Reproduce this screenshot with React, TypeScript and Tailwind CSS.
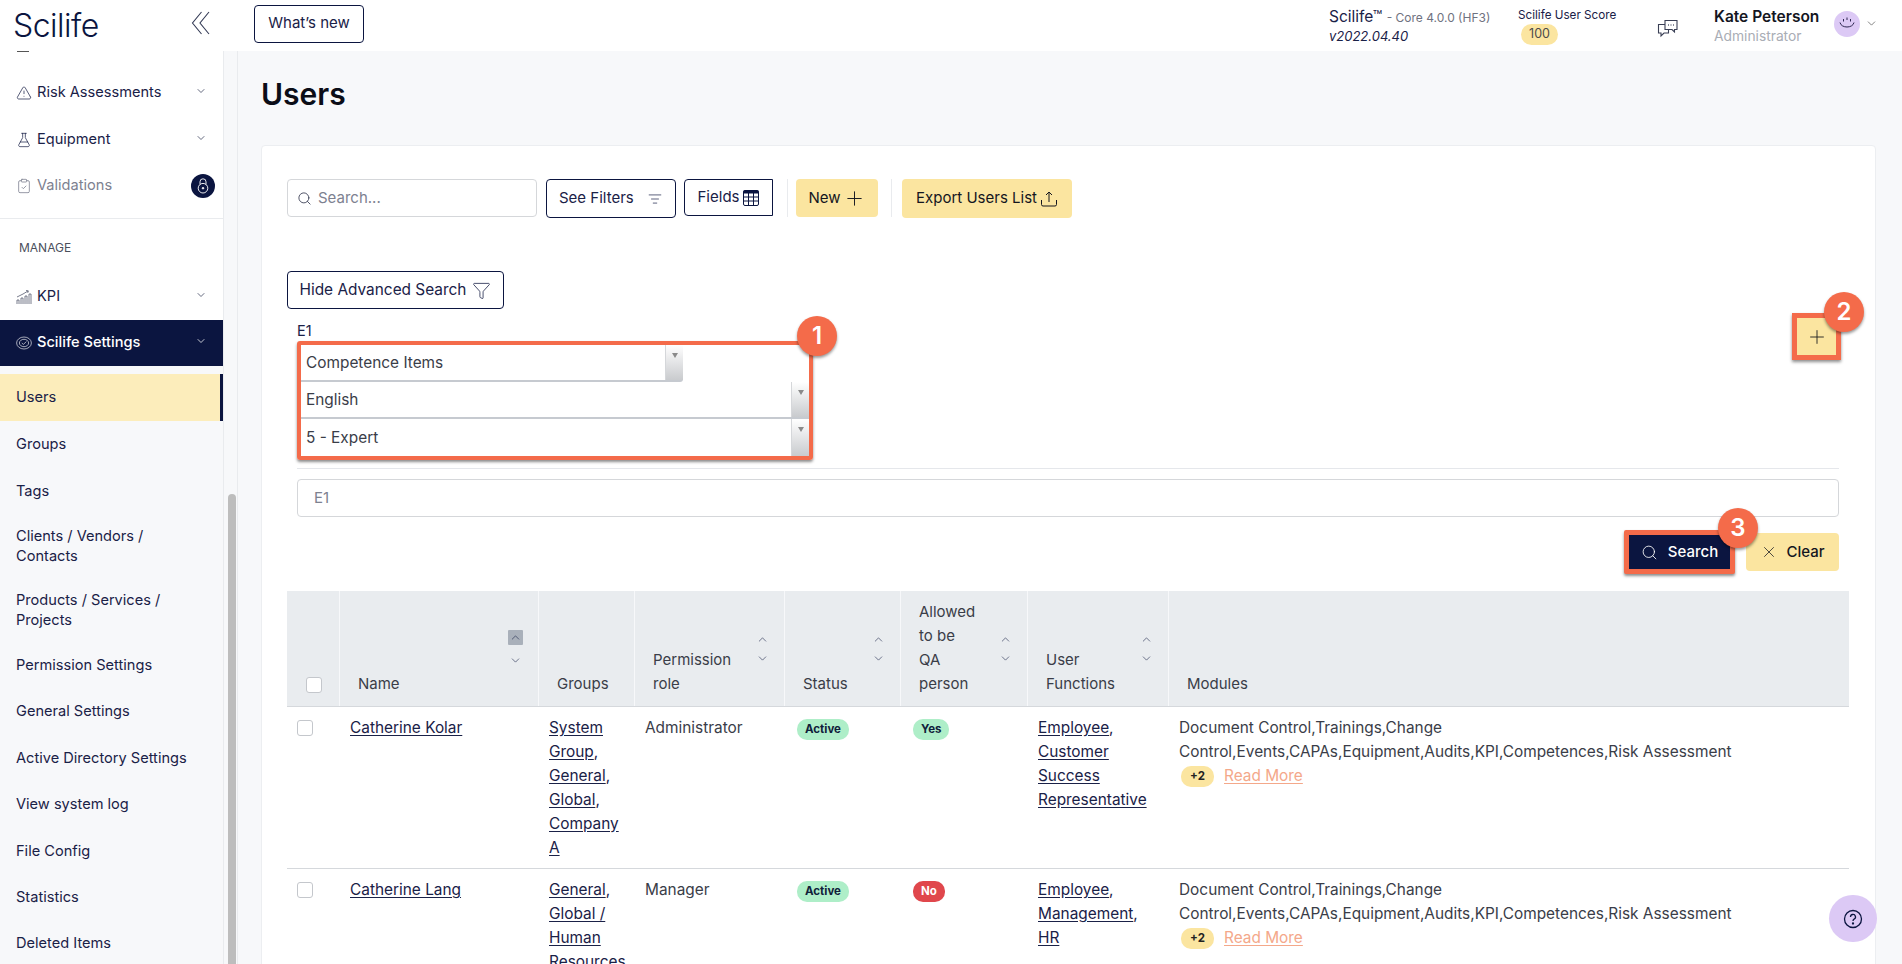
import { ChevronDown, ChevronUp, ClipboardCheck, FlaskConical, Funnel, ListFilter, Plus, Search, TriangleAlert, X } from "lucide-react";

const navy = "#0b1540";

function NavRow({ label, icon, muted, noChevron }: { label: string; icon: React.ReactNode; muted?: boolean; noChevron?: boolean }) {
  return (
    <div className={`flex h-[46.5px] shrink-0 items-center pl-[16px] pr-[16px] text-[14.6px] ${muted ? "text-[#7d8190]" : "text-[#1a2147]"}`}>
      <span className="mr-[5px] flex w-[16px] justify-center">{icon}</span>
      <span className="flex-1">{label}</span>
      {!noChevron && <ChevronDown size={12} strokeWidth={1.5} className="mb-[4px] text-[#333a55]" />}
    </div>
  );
}

const subItems = [
  { label: "Groups" },
  { label: "Tags" },
  { label: "Clients / Vendors / Contacts", two: true },
  { label: "Products / Services / Projects", two: true },
  { label: "Permission Settings" },
  { label: "General Settings" },
  { label: "Active Directory Settings" },
  { label: "View system log" },
  { label: "File Config" },
  { label: "Statistics" },
  { label: "Deleted Items" },
];

function Sidebar() {
  return (
    <aside className="flex w-[238px] shrink-0 overflow-hidden border-r border-[#e9ebee] bg-[#f7f8fa]">
      <div className="flex w-[224px] shrink-0 flex-col border-r border-[#e9ebee] bg-white">
        <div className="ml-[17px] h-[1px] w-[12px] shrink-0 bg-[#555]" />
        <div className="shrink-0 pt-[18px]">
          <NavRow label="Risk Assessments" icon={<TriangleAlert size={16} strokeWidth={1.1} />} />
          <NavRow label="Equipment" icon={<FlaskConical size={16} strokeWidth={1.1} />} />
          <div className="relative">
            <NavRow label="Validations" muted noChevron icon={<ClipboardCheck size={16} strokeWidth={1.2} />} />
            <span className="absolute right-[8px] top-[11px] flex h-[24px] w-[24px] items-center justify-center rounded-full bg-[#0b1540]">
              <svg width="12" height="16" viewBox="0 0 12 16" fill="none" stroke="#fff" strokeWidth="0.9">
                <circle cx="6" cy="10.2" r="4.8" />
                <path d="M3 6.5V3.8a3 3 0 0 1 6 0v2.7" />
                <circle cx="6" cy="10.2" r="0.8" fill="#fff" />
              </svg>
            </span>
          </div>
        </div>
        <div className="mt-[8px] h-[1px] shrink-0 bg-[#e9ebee]" />
        <div className="mt-[21px] shrink-0 pl-[19px] text-[12px] leading-[16px] text-[#4b4f5c]">MANAGE</div>
        <div className="mt-[18px] shrink-0">
          <NavRow
            label="KPI"
            icon={
              <svg width="16" height="16" viewBox="0 0 16 16" fill="none" stroke="#555a6e" strokeWidth="0.8">
                <path d="M1 15v-4h2v4M5 15V9h2v6M9 15V7h2v8M13 15V5h2v10" />
                <path d="M1 8l6-3 5-3M10 1.5l2.4.4-.7 2" />
              </svg>
            }
          />
        </div>
        <div className="flex h-[46px] shrink-0 items-center bg-[#0b1540] pl-[16px] pr-[16px] text-[14.6px] font-medium text-white">
          <svg className="mr-[5px]" width="16" height="14" viewBox="0 0 16 14" fill="none" stroke="#c9cbd6" strokeWidth="0.8">
            <ellipse cx="8" cy="7" rx="7.4" ry="6" />
            <ellipse cx="8" cy="7" rx="4.6" ry="3.7" />
            <path d="M5.8 7l1.6 1.4 3-2.8" />
          </svg>
          <span className="flex-1">Scilife Settings</span>
          <ChevronDown size={12} strokeWidth={1.5} className="mb-[4px] text-white" />
        </div>
        <div className="flex-1 bg-[#f7f8fa] pt-[8px] text-[14.6px] text-[#1a2147]">
          <div className="flex h-[47px] items-center border-r-[3px] border-[#0b1540] bg-[#fcedbb] pl-[16px]">Users</div>
          {subItems.map((item) => (
            <div key={item.label} className={`flex items-center pl-[16px] pr-[30px] leading-[20px] ${item.two ? "h-[64px]" : "h-[46.4px]"}`}>
              {item.label}
            </div>
          ))}
        </div>
      </div>
      <div className="flex-1 pl-[4px] pr-[1px] pt-[443px]">
        <div className="h-full w-[8px] rounded-t-[4px] bg-[#bdbdbd]" />
      </div>
    </aside>
  );
}

function Header() {
  return (
    <header className="flex h-[51px] shrink-0 items-center bg-white text-[#1a2147]">
      <div className="flex w-[254px] shrink-0 items-center pl-[13px]">
        <span className="text-[32px] font-light leading-[40px] tracking-[-0.5px] text-[#0b1540]">Scilife</span>
        <svg className="ml-[92px] mb-[5px]" width="19" height="24" viewBox="0 0 19 24" fill="none" stroke="#333a55" strokeWidth="1.1">
          <path d="M10.500 1 1.500 12 10.500 23M18 1 9 12 18 23" />
        </svg>
      </div>
      <button className="mb-[4px] h-[38px] w-[110px] rounded-[4px] border border-[#0b1540] text-[15px]">What&rsquo;s new</button>
      <div className="ml-auto flex items-center pr-[24px]">
        <div className="w-[189px]">
          <div className="text-[15.5px] leading-[20px]">
            Scilife™ <span className="text-[12px] text-[#6f7280]">- Core 4.0.0 (HF3)</span>
          </div>
          <div className="text-[13px] italic leading-[16px]">v2022.04.40</div>
        </div>
        <div className="w-[139px]">
          <div className="text-[11.7px] leading-[16px]">Scilife User Score</div>
          <span className="ml-[3px] mt-[1px] flex h-[21px] w-[37px] items-center justify-center rounded-[11px] bg-[#fbe5a0] text-[12.5px] text-[#4b4b4b]">100</span>
        </div>
        <div className="w-[57px] pt-[5px]">
          <svg width="22" height="20" viewBox="0 0 22 20" fill="none" stroke="#3a3f55" strokeWidth="1.1">
            <path d="M8 2.500h12v9h-2.500v2.500l-2.500-2.500H8z" />
            <path d="M8 6.500H1.500V15h2.500v3l3-3h4.500v-3.500" />
            <path d="M11 7h.8M13.600 7h.8M16.200 7h.8" strokeWidth="1.4" />
          </svg>
        </div>
        <div className="w-[120px]">
          <div className="text-[15.5px] font-semibold leading-[20px] text-[#14161f]">Kate Peterson</div>
          <div className="text-[13.8px] leading-[18px] text-[#a9adb5]">Administrator</div>
        </div>
        <span className="mb-[4px] flex h-[26px] w-[26px] items-center justify-center rounded-full bg-[#dcc9f5]">
          <svg width="18" height="13" viewBox="0 0 18 13" fill="none" stroke="#2d2550" strokeWidth="1">
            <path d="M2 5.500c1.200 6 12.800 6 14 0M5.500 2v2.500M9 0.500v2.500M12.500 2v2.500" />
          </svg>
        </span>
        <ChevronDown size={13} strokeWidth={1.2} className="mb-[4px] ml-[5px] text-[#444]" />
      </div>
    </header>
  );
}

function Badge({ n, className }: { n: number; className: string }) {
  return (
    <span className={`absolute z-10 flex h-[40px] w-[40px] items-center justify-center rounded-full bg-[#f46b4a] text-[24px] font-semibold text-white shadow-[0_2px_3px_rgba(0,0,0,0.4)] ${className}`}>
      {n}
    </span>
  );
}

function SelectRow({ value, narrow, last }: { value: string; narrow?: boolean; last?: boolean }) {
  return (
    <div className={`flex h-[37px] items-stretch ${last ? "" : "border-b-2 border-[#c6cad0]"} ${narrow ? "w-[382px] rounded-br-[3px]" : "w-full"}`}>
      <span className="flex flex-1 items-center pl-[5px] text-[15.4px] text-[#3a3d48]">{value}</span>
      <span className="flex w-[18px] justify-center border-l border-[#d5d7da] bg-gradient-to-b from-white to-[#c9cbce] pt-[8px]">
        <span className="h-0 w-0 border-x-[3.5px] border-t-[5px] border-x-transparent border-t-[#8a8a8a]" />
      </span>
    </div>
  );
}

function SortArrows({ active }: { active?: boolean }) {
  return (
    <div className={`mt-[10px] flex flex-col items-center self-center text-[#1a2147] ${active ? "gap-[9px]" : "gap-[6px]"}`}>
      <span className={`flex items-center justify-center rounded-[1px] ${active ? "h-[15px] w-[15px] bg-[#a9b0ba]" : "h-[13px] w-[13px]"}`}>
        <ChevronUp size={13} strokeWidth={1.1} />
      </span>
      <ChevronDown size={13} strokeWidth={1.1} />
    </div>
  );
}

function Th({ children, sort, active }: { children?: React.ReactNode; sort?: boolean; active?: boolean }) {
  return (
    <div className="flex items-end justify-between border-l border-[#f7f8fa] pb-[10px] pl-[18px] pr-[15px] text-[15px] leading-[24px] text-[#3a3d48]">
      <div>{children}</div>
      {sort && <SortArrows active={active} />}
    </div>
  );
}

function Pill({ children, color }: { children: React.ReactNode; color: string }) {
  return <span className={`flex h-[21px] w-fit items-center rounded-[10px] px-[8px] text-[11.5px] font-bold leading-none text-[#10203a] ${color}`}>{children}</span>;
}

const rows = [
  {
    name: "Catherine Kolar",
    groups: ["System\nGroup", "General", "Global", "Company\nA"],
    role: "Administrator",
    qa: "Yes",
    fns: ["Employee", "Customer\nSuccess\nRepresentative"],
  },
  {
    name: "Catherine Lang",
    groups: ["General", "Global /\nHuman\nResources"],
    role: "Manager",
    qa: "No",
    fns: ["Employee", "Management", "HR"],
  },
];

function Links({ items }: { items: string[] }) {
  return (
    <div className="whitespace-pre-line">
      {items.map((t, i) => (
        <span key={t}>
          <a className="underline underline-offset-2">{t}</a>
          {i < items.length - 1 ? ",\n" : ""}
        </span>
      ))}
    </div>
  );
}

const gridCols = "grid grid-cols-[52px_199px_96px_150px_116px_127px_141px_681px]";

function UsersTable() {
  return (
    <div className="mt-[17px] w-[1562px] text-[15.4px] leading-[24px] text-[#1a2147]">
      <div className={`${gridCols} h-[116px] border-b border-[#d5d8dc] bg-[#e9ecef]`}>
        <div className="flex items-end justify-center pb-[13px] pl-[2px]">
          <span className="h-[16px] w-[16px] rounded-[3px] border border-[#c4c7cc] bg-white" />
        </div>
        <Th sort active>Name</Th>
        <Th>Groups</Th>
        <Th sort>
          Permission
          <br />
          role
        </Th>
        <Th sort>Status</Th>
        <Th sort>
          Allowed
          <br />
          to be
          <br />
          QA
          <br />
          person
        </Th>
        <Th sort>
          User
          <br />
          Functions
        </Th>
        <Th>Modules</Th>
      </div>
      {rows.map((r) => (
        <div key={r.name} className={`${gridCols} border-b border-[#d5d8dc] pb-[8px] pt-[9px]`}>
          <div className="pl-[10px] pt-[4px]">
            <span className="block h-[16px] w-[16px] rounded-[3px] border border-[#c4c7cc] bg-white" />
          </div>
          <div className="pl-[11px]">
            <a className="underline underline-offset-2">{r.name}</a>
          </div>
          <div className="pl-[11px]">
            <Links items={r.groups} />
          </div>
          <div className="pl-[11px] text-[#3a3d48]">{r.role}</div>
          <div className="pl-[13px] pt-[3px]">
            <Pill color="bg-[#aeeec8]">Active</Pill>
          </div>
          <div className="pl-[13px] pt-[3px]">
            <Pill color={r.qa === "Yes" ? "bg-[#aeeec8]" : "bg-[#e0474c] text-white"}>{r.qa}</Pill>
          </div>
          <div className="pl-[11px]">
            <Links items={r.fns} />
          </div>
          <div className="pl-[11px] pr-[60px] text-[#3a3d48]">
            Document Control,Trainings,Change Control,Events,CAPAs,Equipment,Audits,KPI,Competences,Risk Assessment
            <div className="flex items-center">
              <span className="ml-[2px] flex h-[21px] w-[33px] items-center justify-center rounded-[10px] bg-[#fbe5a0] text-[11.5px] font-bold text-[#222]">+2</span>
              <a className="ml-[10px] text-[#f4a88a] underline underline-offset-2">Read More</a>
            </div>
          </div>
        </div>
      ))}
    </div>
  );
}

function Toolbar() {
  return (
    <div className="flex items-start text-[15px] text-[#1a2147]">
      <div className="flex h-[38px] w-[250px] items-center rounded-[4px] border border-[#d5d7da] pl-[9px] text-[#7d8190]">
        <Search size={15} strokeWidth={1.4} className="mr-[6px] text-[#3a3f55]" />
        Search...
      </div>
      <button className="ml-[9px] flex h-[39px] w-[130px] items-center justify-between rounded-[4px] border border-[#0b1540] pl-[12px] pr-[13px]">
        See Filters <ListFilter size={14} strokeWidth={1.2} />
      </button>
      <button className="ml-[8px] flex h-[37px] w-[89px] items-center justify-center gap-[4px] rounded-l-[4px] border border-[#0b1540]">
        Fields
        <svg width="16" height="16" viewBox="0 0 16 16" fill="none" stroke={navy} strokeWidth="1">
          <rect x="0.500" y="0.500" width="15" height="15" rx="1.500" />
          <path d="M0.500 2h15" strokeWidth="3" />
          <path d="M0.500 7h15M0.500 11h15M5.500 3v12M10.500 3v12" />
        </svg>
      </button>
      <span className="ml-[14px] mr-[8px] h-[38px] w-[1px] bg-[#e9ebee]" />
      <button className="flex h-[38px] w-[82px] items-center justify-center gap-[2px] rounded-[4px] bg-[#fbe5a0] text-[#14161f]">
        New <Plus size={23} strokeWidth={1} />
      </button>
      <span className="ml-[13px] mr-[10px] h-[38px] w-[1px] bg-[#e9ebee]" />
      <button className="flex h-[39px] w-[170px] items-center justify-center gap-[3px] rounded-[4px] bg-[#fbe5a0] text-[#14161f]">
        Export Users List
        <svg width="18" height="18" viewBox="0 0 18 18" fill="none" stroke="#14161f" strokeWidth="1">
          <path d="M9 12V2M6 5l3-3 3 3M1.500 10v4.500a1.500 1.500 0 0 0 1.500 1.500h12a1.500 1.500 0 0 0 1.500-1.500V10" />
        </svg>
      </button>
    </div>
  );
}

function AdvancedSearch() {
  return (
    <div className="ml-[10px] mr-[11px] text-[#1a2147]">
      <div className="flex h-[160px] items-start justify-between border-b border-[#e5e7eb]">
        <div>
          <div className="mt-[11px] text-[14.5px] leading-[21px]">E1</div>
          <div className="relative w-[516px] rounded-[3px] border-4 border-[#f46b4a] shadow-[0_2px_3px_rgba(0,0,0,0.45)]">
            <SelectRow value="Competence Items" narrow />
            <SelectRow value="English" />
            <SelectRow value="5 - Expert" last />
            <Badge n={1} className="right-[-28px] top-[-29px]" />
          </div>
        </div>
        <div className="relative mr-[-2px] mt-[4px] flex h-[47px] w-[49px] items-center justify-center border-[5px] border-[#f46b4a] bg-[#fbe5a0] shadow-[0_2px_3px_rgba(0,0,0,0.45)]">
          <Plus size={22} strokeWidth={1} className="text-[#222]" />
          <Badge n={2} className="right-[-28px] top-[-26px]" />
        </div>
      </div>
      <div className="mt-[10px] flex h-[38px] items-center rounded-[4px] border border-[#d5d7da] pl-[16px] text-[15px] text-[#7d8190]">E1</div>
      <div className="mt-[13px] flex items-center justify-end gap-[11px]">
        <button className="relative flex h-[44px] w-[111px] items-center justify-center gap-[10px] rounded-[2px] border-[5px] border-[#f46b4a] bg-[#0b1540] text-[15px] font-medium text-white shadow-[0_2px_3px_rgba(0,0,0,0.45)]">
          <Search size={17} strokeWidth={1.2} />
          Search
          <Badge n={3} className="right-[-28px] top-[-27px]" />
        </button>
        <button className="flex h-[38px] w-[93px] items-center justify-center gap-[8px] rounded-[4px] bg-[#fbe5a0] text-[15px] font-medium text-[#14161f]">
          <X size={18} strokeWidth={1} />
          Clear
        </button>
      </div>
    </div>
  );
}

export default function App() {
  return (
    <div className="relative flex h-screen w-full flex-col overflow-hidden bg-[#f7f8fa] [font-family:Inter,sans-serif]">
      <Header />
      <div className="flex min-h-0 flex-1">
        <Sidebar />
        <main className="min-w-0 flex-1 pl-[23px] pr-[26px]">
          <h1 className="mt-[22px] text-[30px] font-semibold leading-[42px] text-[#0b0d17]">Users</h1>
          <section className="mt-[30px] rounded-t-[4px] border border-[#eceef1] bg-white pl-[25px] pr-[25px] pt-[33px]">
            <Toolbar />
            <button className="mt-[53px] flex h-[38px] w-[217px] items-center justify-center gap-[6px] rounded-[4px] border border-[#0b1540] text-[15.4px] text-[#1a2147]">
              Hide Advanced Search <Funnel size={19} strokeWidth={1} />
            </button>
            <AdvancedSearch />
            <UsersTable />
          </section>
        </main>
      </div>
      <button className="absolute bottom-[22px] right-[25px] flex h-[47px] w-[48px] items-center justify-center rounded-full bg-[#dcc9f5] text-[#0b1540]">
        <svg width="20" height="20" viewBox="0 0 20 20" fill="none" stroke="currentColor" strokeWidth="1.300">
          <circle cx="10" cy="10" r="8.500" />
          <path d="M7.500 8a2.500 2.500 0 1 1 3.600 2.200c-.8.400-1.100.900-1.100 1.800" />
          <circle cx="10" cy="14.500" r="0.500" fill="currentColor" />
        </svg>
      </button>
    </div>
  );
}
